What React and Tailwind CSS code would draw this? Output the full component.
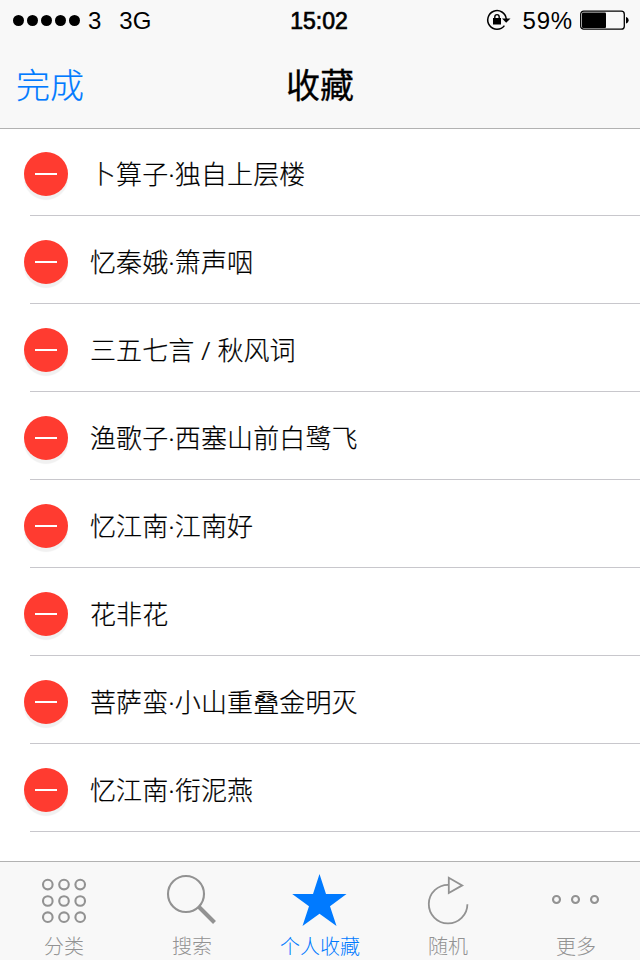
import { useState } from "react";

const poems = [
  "卜算子·独自上层楼",
  "忆秦娥·箫声咽",
  "三五七言 / 秋风词",
  "渔歌子·西塞山前白鹭飞",
  "忆江南·江南好",
  "花非花",
  "菩萨蛮·小山重叠金明灭",
  "忆江南·衔泥燕",
];

const GridIcon = () => (
  <svg width="56" height="56" viewBox="0 0 56 56" fill="none" stroke="currentColor" strokeWidth="2.1">
    {[11.6, 28, 44.2].map((y) =>
      [11.8, 28, 44.2].map((x) => <circle key={`${x}-${y}`} cx={x} cy={y} r="4.8" />)
    )}
  </svg>
);

const SearchIcon = () => (
  <svg width="56" height="56" viewBox="0 0 56 56" fill="none" stroke="currentColor">
    <circle cx="22" cy="21" r="18" strokeWidth="2.1" />
    <path d="M34.5 33.5L50.5 49.5" strokeWidth="4" />
  </svg>
);

const StarIcon = () => (
  <svg width="56" height="56" viewBox="0 0 56 56" fill="currentColor">
    <path d="M27.5 1L34 21H54.5L38 33.2L44.5 53L27.5 40.8L10.5 53L17 33.2L.2 21H21Z" />
  </svg>
);

const RandomIcon = () => (
  <svg width="56" height="56" viewBox="0 0 56 56" fill="none" stroke="currentColor" strokeWidth="1.8">
    <path d="M28.6 11.8A19.3 19.3 0 1 0 47.4 31.2" />
    <path d="M28.8 4.8V20L42.2 12.4Z" />
  </svg>
);

const MoreIcon = () => (
  <svg width="56" height="56" viewBox="0 0 56 56" fill="none" stroke="currentColor" strokeWidth="2.1">
    <circle cx="8.5" cy="26.5" r="3.5" />
    <circle cx="27.5" cy="26.5" r="3.5" />
    <circle cx="46.5" cy="26.5" r="3.5" />
  </svg>
);

const tabs = [
  { name: "分类", icon: <GridIcon /> },
  { name: "搜索", icon: <SearchIcon /> },
  { name: "个人收藏", icon: <StarIcon /> },
  { name: "随机", icon: <RandomIcon /> },
  { name: "更多", icon: <MoreIcon /> },
];

const StatusBar = () => (
  <div className="grid grid-cols-3 items-center h-10 font-['Liberation_Sans',sans-serif] text-[24px] leading-[42px]">
    <div className="flex items-center h-10 pl-[13px]">
      <div className="flex gap-[3px]">
        {[0, 1, 2, 3, 4].map((i) => (
          <span key={i} className="size-[11px] rounded-full bg-black" />
        ))}
      </div>
      <span className="ml-[8px] h-10">3</span>
      <span className="ml-[18px] h-10">3G</span>
    </div>
    <div className="h-10 pr-[2px] text-center text-[23px] [-webkit-text-stroke:0.7px_black]">15:02</div>
    <div className="flex items-center justify-end h-10 pr-[11px]">
      {/* Rotation lock */}
      <svg width="26" height="24" viewBox="0 0 26 24" fill="none" stroke="black" className="mr-[11px]">
        <path d="M18.4 17.6A9.3 9.3 0 1 1 20.3 11" strokeWidth="1.5" />
        <path d="M16 10.5H24.5L20.2 14.8Z" fill="black" stroke="none" />
        <rect x="7" y="10" width="8" height="6.5" fill="black" stroke="none" />
        <path d="M8.8 11V9A2.2 2.4 0 0 1 13.2 9V11" strokeWidth="1.4" />
      </svg>
      <span className="mr-[7px] h-10 tracking-[0.8px]">59%</span>
      {/* Battery */}
      <svg width="49" height="20" viewBox="0 0 49 20">
        <rect x=".7" y="1.2" width="43.6" height="18" rx="3" fill="none" stroke="black" strokeWidth="1.3" />
        <rect x="2" y="2.5" width="24" height="15.4" rx="1" />
        <path d="M46 7C49.5 7.5 49.5 13 46 13.5Z" />
      </svg>
    </div>
  </div>
);

const App = () => {
  const [active, setActive] = useState(2);

  return (
    <div className="flex flex-col w-[640px] h-[960px] overflow-hidden bg-white text-black font-['Noto_Sans_CJK_SC',sans-serif]">
      <header className="shrink-0 h-[129px] -mb-px bg-[#f8f8f8] border-b border-[#b2b2b2]">
        <StatusBar />
        <div className="grid grid-cols-3 items-center mt-px h-[86px] text-[34px] leading-[86px]">
          <button className="pl-4 text-left font-light text-[#007aff] [-webkit-text-stroke:0.2px]">完成</button>
          <h1 className="text-center font-normal [-webkit-text-stroke:0.3px]">收藏</h1>
        </div>
      </header>

      <ul className="flex-1">
        {poems.map((poem) => (
          <li key={poem} className="flex items-center h-[88px] pl-6">
            <button className="flex items-center justify-center size-11 mt-1 rounded-full bg-[#ff3b30] shadow-[0_4px_1px_#f1f1f1]">
              <span className="w-[22px] h-0.5 bg-white" />
            </button>
            <span className="relative flex-1 self-stretch -ml-[38px] pl-[60px] pt-1 border-b border-[#c8c7cc] font-['Noto_Sans','Noto_Sans_CJK_SC',sans-serif] text-[26px] leading-[84px] font-light tracking-[0.12px] [-webkit-text-stroke:0.2px]">
              {poem}
            </span>
          </li>
        ))}
      </ul>

      <nav className="shrink-0 grid grid-cols-5 h-[99px] bg-[#f8f8f8] border-t border-[#b2b2b2]">
        {tabs.map((tab, index) => (
          <button
            key={tab.name}
            onClick={() => setActive(index)}
            className={`flex flex-col items-center pt-[11px] text-[20px] leading-[30px] font-light ${
              active === index ? "text-[#007aff]" : "text-[#929292]"
            }`}
          >
            {tab.icon}
            <span className="mt-0.5">{tab.name}</span>
          </button>
        ))}
      </nav>
    </div>
  );
};

export default App;
